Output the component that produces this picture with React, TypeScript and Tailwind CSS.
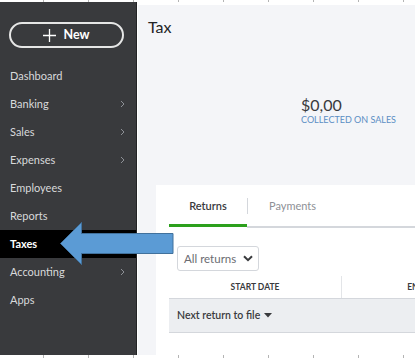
import React from "react";

const font = { fontFamily: "Lato, 'Open Sans', Arial, sans-serif" };

function Chevron() {
  return (
    <svg width="5" height="8" viewBox="0 0 5 8" className="shrink-0">
      <path d="M1 1 L4 4 L1 7" fill="none" stroke="#8d9096" strokeWidth="1" />
    </svg>
  );
}

const navItems: { label: string; chevron?: boolean; active?: boolean }[] = [
  { label: "Dashboard" },
  { label: "Banking", chevron: true },
  { label: "Sales", chevron: true },
  { label: "Expenses", chevron: true },
  { label: "Employees" },
  { label: "Reports" },
  { label: "Taxes", active: true },
  { label: "Accounting", chevron: true },
  { label: "Apps" },
];

function TopTicks({ h }: { h: number }) {
  const xs = Array.from({ length: 9 }, (_, i) => 43.5 + i * 45);
  return (
    <svg width="415" height={h} className="block shrink-0">
      {xs.map((x) => (
        <line key={x} x1={x} y1={0} x2={x} y2={h} stroke="#b4b4b4" strokeWidth="1" />
      ))}
    </svg>
  );
}

function RightTicks() {
  const ys = Array.from({ length: 26 }, (_, i) => 0.5 + i * 14);
  return (
    <svg width="3" height="353" className="block shrink-0">
      {ys.map((y) => (
        <line key={y} x1={0} y1={y} x2={3} y2={y} stroke="#a8a8a8" strokeWidth="1" />
      ))}
    </svg>
  );
}

export default function App() {
  return (
    <div
      className="relative w-[415px] h-[358px] bg-white flex flex-col overflow-hidden"
      style={font}
    >
      <TopTicks h={2} />
      <div className="flex h-[353px]">
        {/* Sidebar */}
        <div className="w-[137px] shrink-0 bg-[#393a3d] border-r border-[#222325] flex flex-col">
          <div className="mt-[20px] ml-[9px] w-[115px] h-[26px] rounded-full border-2 border-[#e6e6e6] flex items-center justify-center gap-[7px]">
            <svg width="13" height="13" viewBox="0 0 13 13">
              <path d="M6.5 0 V13 M0 6.5 H13" stroke="#ffffff" strokeWidth="1.3" />
            </svg>
            <span className="text-white font-bold text-[12.5px] leading-none">New</span>
          </div>
          <div className="mt-[14px] flex flex-col">
            {navItems.map((it) => (
              <div
                key={it.label}
                className={`h-[28px] flex items-center justify-between pl-[10px] pr-[11px] text-[11px] ${
                  it.active ? "bg-black text-white font-bold" : "text-[#d8d9db]"
                }`}
              >
                <span>{it.label}</span>
                {it.chevron && <Chevron />}
              </div>
            ))}
          </div>
        </div>
        {/* Main */}
        <div className="flex-1 bg-white pl-[1px] pt-[3px] flex flex-col">
          <div className="flex-1 bg-[#f4f5f8] flex flex-col">
            <div className="pl-[10px] pt-[12px] text-[16px] leading-[20px] text-[#232426]">Tax</div>
            <div className="pl-[163px] pt-[58px] flex flex-col">
              <div className="text-[16px] leading-[20px] text-[#393a3d]">$0,00</div>
              <div className="text-[9px] leading-[11px] text-[#5b8ec4] -mt-[1px]">COLLECTED ON SALES</div>
            </div>
            {/* Card */}
            <div className="mt-[60px] ml-[18px] flex-1 bg-white pl-[13px] flex flex-col">
              <div className="h-[39px] pt-[3px] flex items-center">
                <div className="w-[78px] text-center text-[11px] font-semibold text-[#393a3d]">Returns</div>
                <div className="w-px h-[16px] bg-[#d4d7dc]" />
                <div className="pl-[21px] text-[11px] text-[#8d9096]">Payments</div>
              </div>
              <div className="flex items-start h-[4px]">
                <div className="w-[78px] h-[3px] bg-[#2ca01c]" />
                <div className="flex-1 h-[2px] mt-[2px] bg-[#d4d7dc]" />
              </div>
              <div className="mt-[18px] ml-[8px] w-[82px] h-[25px] border border-[#d4d7dc] rounded-[3px] flex items-center pl-[6px] gap-[7px]">
                <span className="text-[11.5px] text-[#6b6c72]">All returns</span>
                <svg width="10" height="7" viewBox="0 0 10 7">
                  <path d="M1 1.2 L5 5.2 L9 1.2" fill="none" stroke="#393a3d" strokeWidth="2" />
                </svg>
              </div>
              <div className="mt-[5px] flex h-[23px] border-b border-[#d4d7dc]">
                <div className="w-[172px] flex items-center justify-center text-[8.5px] font-bold text-[#393a3d]">
                  START DATE
                </div>
                <div className="w-px bg-[#e3e5e8]" />
                <div className="w-[172px] shrink-0 flex items-center justify-center text-[8.5px] font-bold text-[#393a3d]">
                  END DATE
                </div>
              </div>
              <div className="h-[34px] bg-[#eceef1] border-b border-[#d4d7dc] flex items-center pl-[8px] gap-[4px]">
                <span className="text-[10.5px] font-semibold text-[#393a3d]">Next return to file</span>
                <svg width="8" height="5" viewBox="0 0 8 5">
                  <path d="M0 0 H8 L4 4.5 Z" fill="#393a3d" />
                </svg>
              </div>
            </div>
          </div>
        </div>
        <RightTicks />
      </div>
      <div className="h-[3px]">
        <TopTicks h={3} />
      </div>

      {/* Annotation arrow */}
      <svg
        className="absolute left-[59px] top-[221px]"
        width="116"
        height="45"
        viewBox="0 0 116 45"
      >
        <path
          d="M1.5 22.5 L22.5 1.5 L22.5 12.5 L114 12.5 L114 32.5 L22.5 32.5 L22.5 43.5 Z"
          fill="#5b9bd5"
          stroke="#41719c"
          strokeWidth="1"
        />
      </svg>
    </div>
  );
}
